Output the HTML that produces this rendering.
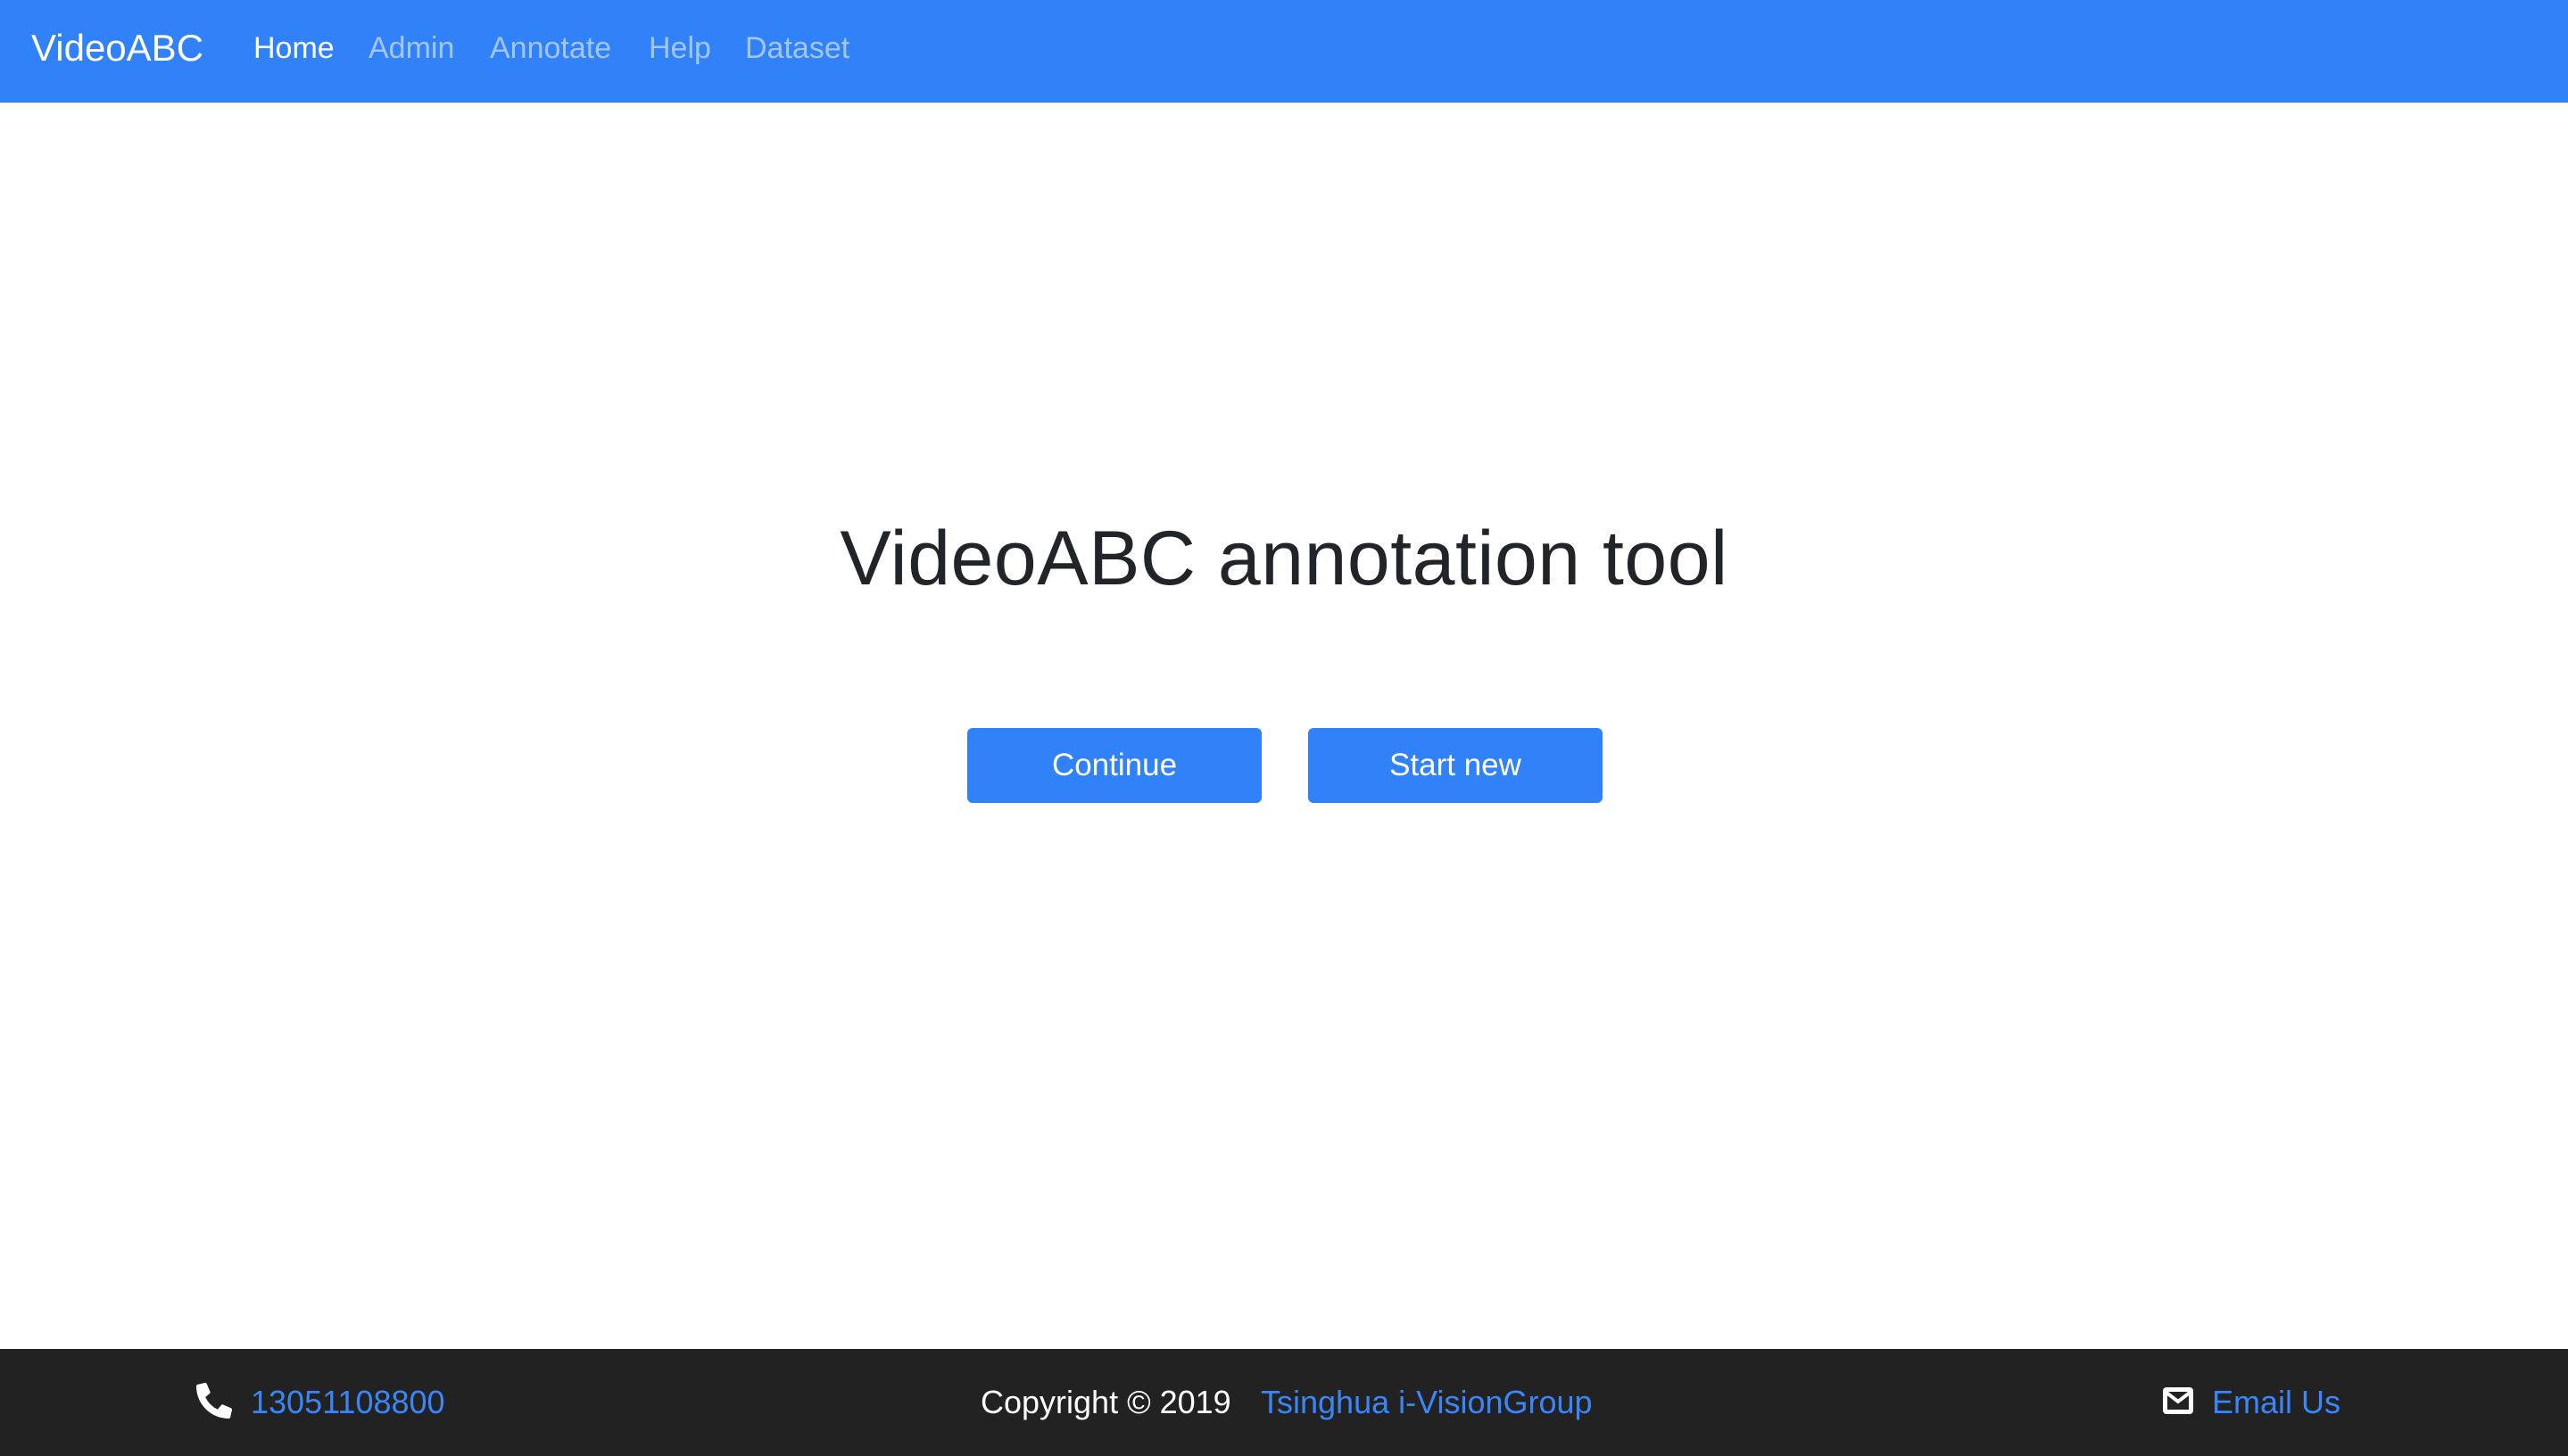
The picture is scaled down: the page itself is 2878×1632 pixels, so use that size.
<!DOCTYPE html>
<html><head><meta charset="utf-8"><style>
*{margin:0;padding:0;box-sizing:border-box}
body{width:2878px;height:1632px;background:#fff;font-family:"Liberation Sans",Helvetica,Arial,sans-serif;position:relative;overflow:hidden;color:#212529}
.nav{position:absolute;left:0;top:0;width:2878px;height:115px;background:#3182f8}
.nav span{position:absolute;top:0;line-height:108px;font-size:34px;color:rgba(255,255,255,.55)}
.nav .brand{left:35px;font-size:42px;color:#fff}
.nav .active{color:#fff}
h1{position:absolute;left:0;width:2878px;top:570px;text-align:center;font-size:86px;font-weight:400;line-height:112px;color:#212529;letter-spacing:0.5px}
.btn{position:absolute;top:816px;width:330px;height:84px;background:#3182f8;color:#fff;border-radius:6px;text-align:center;line-height:84px;font-size:35px}
.foot{position:absolute;left:0;top:1512px;width:2878px;height:120px;background:#222}
.foot span{position:absolute;top:0;line-height:120px;font-size:36px;color:#fff}
.foot .l{color:#3b86f7}
.foot svg{position:absolute}
</style></head><body>
<div class="nav">
<span class="brand">VideoABC</span>
<span class="active" style="left:284px">Home</span>
<span style="left:413px">Admin</span>
<span style="left:549px">Annotate</span>
<span style="left:727px">Help</span>
<span style="left:835px">Dataset</span>
</div>
<h1>VideoABC annotation tool</h1>
<div class="btn" style="left:1084px">Continue</div>
<div class="btn" style="left:1466px">Start new</div>
<div class="foot">
<svg style="left:220px;top:38px" width="40" height="40" viewBox="0 0 512 512"><path fill="#fff" d="M497 361l-112-48a24 24 0 0 0-28 7l-50 61A371 371 0 0 1 130 204l61-50a24 24 0 0 0 7-28L150 14a24 24 0 0 0-27-14L19 24A24 24 0 0 0 0 48c0 257 208 464 464 464a24 24 0 0 0 24-19l24-104a24 24 0 0 0-15-28z"/></svg>
<span class="l" style="left:281px">13051108800</span>
<span style="left:1099px">Copyright © 2019</span>
<span class="l" style="left:1413px">Tsinghua i-VisionGroup</span>
<svg style="left:2424px;top:43px" width="34" height="30" viewBox="0 0 34 30"><rect x="0" y="0" width="34" height="30" rx="4" fill="#fff"/><rect x="5" y="5" width="24" height="20" fill="#222"/><path d="M4 6l13 10 13-10" fill="none" stroke="#fff" stroke-width="4"/></svg>
<span class="l" style="left:2479px">Email Us</span>
</div>
</body></html>
